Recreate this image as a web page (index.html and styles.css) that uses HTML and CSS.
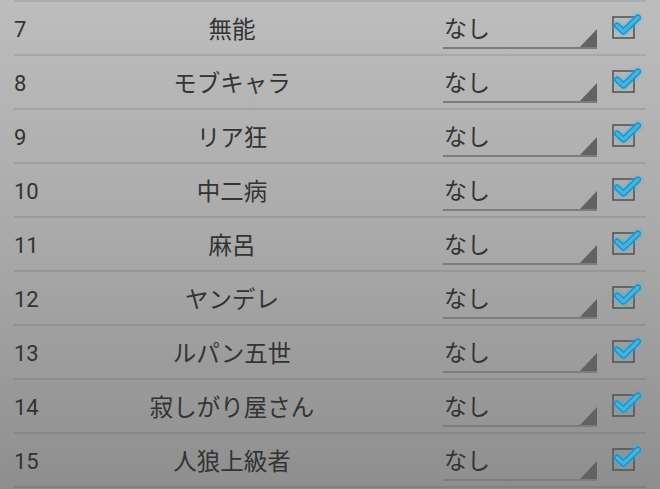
FILE: index.html
```html
<!DOCTYPE html>
<html lang="ja">
<head>
<meta charset="utf-8">
<link rel="stylesheet" href="styles.css">
</head>
<body>
<div class="list">
  <div class="row"><span class="num">7</span><span class="name">無能</span><div class="spinner"><span class="val">なし</span><span class="tri"></span></div><span class="cb"><svg width="34" height="32" viewBox="0 0 34 32"><rect x="1" y="5" width="21" height="21" class="box"/><path d="M5 13.5 L11.5 19.5 L26 5.5" class="chk-o"/><path d="M5 13.5 L11.5 19.5 L26 5.5" class="chk-i"/></svg></span></div>
  <div class="row"><span class="num">8</span><span class="name">モブキャラ</span><div class="spinner"><span class="val">なし</span><span class="tri"></span></div><span class="cb"><svg width="34" height="32" viewBox="0 0 34 32"><rect x="1" y="5" width="21" height="21" class="box"/><path d="M5 13.5 L11.5 19.5 L26 5.5" class="chk-o"/><path d="M5 13.5 L11.5 19.5 L26 5.5" class="chk-i"/></svg></span></div>
  <div class="row"><span class="num">9</span><span class="name">リア狂</span><div class="spinner"><span class="val">なし</span><span class="tri"></span></div><span class="cb"><svg width="34" height="32" viewBox="0 0 34 32"><rect x="1" y="5" width="21" height="21" class="box"/><path d="M5 13.5 L11.5 19.5 L26 5.5" class="chk-o"/><path d="M5 13.5 L11.5 19.5 L26 5.5" class="chk-i"/></svg></span></div>
  <div class="row"><span class="num">10</span><span class="name">中二病</span><div class="spinner"><span class="val">なし</span><span class="tri"></span></div><span class="cb"><svg width="34" height="32" viewBox="0 0 34 32"><rect x="1" y="5" width="21" height="21" class="box"/><path d="M5 13.5 L11.5 19.5 L26 5.5" class="chk-o"/><path d="M5 13.5 L11.5 19.5 L26 5.5" class="chk-i"/></svg></span></div>
  <div class="row"><span class="num">11</span><span class="name">麻呂</span><div class="spinner"><span class="val">なし</span><span class="tri"></span></div><span class="cb"><svg width="34" height="32" viewBox="0 0 34 32"><rect x="1" y="5" width="21" height="21" class="box"/><path d="M5 13.5 L11.5 19.5 L26 5.5" class="chk-o"/><path d="M5 13.5 L11.5 19.5 L26 5.5" class="chk-i"/></svg></span></div>
  <div class="row"><span class="num">12</span><span class="name">ヤンデレ</span><div class="spinner"><span class="val">なし</span><span class="tri"></span></div><span class="cb"><svg width="34" height="32" viewBox="0 0 34 32"><rect x="1" y="5" width="21" height="21" class="box"/><path d="M5 13.5 L11.5 19.5 L26 5.5" class="chk-o"/><path d="M5 13.5 L11.5 19.5 L26 5.5" class="chk-i"/></svg></span></div>
  <div class="row"><span class="num">13</span><span class="name">ルパン五世</span><div class="spinner"><span class="val">なし</span><span class="tri"></span></div><span class="cb"><svg width="34" height="32" viewBox="0 0 34 32"><rect x="1" y="5" width="21" height="21" class="box"/><path d="M5 13.5 L11.5 19.5 L26 5.5" class="chk-o"/><path d="M5 13.5 L11.5 19.5 L26 5.5" class="chk-i"/></svg></span></div>
  <div class="row"><span class="num">14</span><span class="name">寂しがり屋さん</span><div class="spinner"><span class="val">なし</span><span class="tri"></span></div><span class="cb"><svg width="34" height="32" viewBox="0 0 34 32"><rect x="1" y="5" width="21" height="21" class="box"/><path d="M5 13.5 L11.5 19.5 L26 5.5" class="chk-o"/><path d="M5 13.5 L11.5 19.5 L26 5.5" class="chk-i"/></svg></span></div>
  <div class="row"><span class="num">15</span><span class="name">人狼上級者</span><div class="spinner"><span class="val">なし</span><span class="tri"></span></div><span class="cb"><svg width="34" height="32" viewBox="0 0 34 32"><rect x="1" y="5" width="21" height="21" class="box"/><path d="M5 13.5 L11.5 19.5 L26 5.5" class="chk-o"/><path d="M5 13.5 L11.5 19.5 L26 5.5" class="chk-i"/></svg></span></div>
  <div class="row last"></div>
</div>
</body>
</html>
```
FILE: styles.css
```css
html, body {
  margin: 0;
  padding: 0;
  width: 660px;
  height: 489px;
  overflow: hidden;
}
body {
  background: linear-gradient(to bottom, #bdbdbd 0%, #a9a9a9 50%, #8e8e8e 100%);
  font-family: Roboto, "Noto Sans CJK JP", sans-serif;
  color: #333;
}
.list {
  margin: 0 14px;
  width: 632px;
}
.row {
  display: flex;
  align-items: center;
  height: 52px;
  border-top: 2px solid rgba(0, 0, 0, 0.09);
}
.row.last {
  height: 1px;
}
.num {
  width: 46px;
  font-size: 22px;
  line-height: 30px;
  padding-top: 4px;
}
.name {
  width: 344px;
  text-align: center;
  font-family: "Noto Sans CJK JP", sans-serif;
  font-size: 23.5px;
  line-height: 30px;
}
.spinner {
  align-self: flex-start;
  margin-top: 6px;
  margin-left: 39px;
  width: 154px;
  height: 41px;
  box-sizing: border-box;
  border-bottom: 2px solid #7c7c7c;
  display: flex;
  justify-content: space-between;
  align-items: flex-end;
}
.val {
  align-self: flex-start;
  padding-top: 4px;
  padding-left: 1px;
  font-family: "Noto Sans CJK JP", sans-serif;
  font-size: 23px;
  line-height: 30px;
}
.tri {
  width: 17px;
  height: 18px;
  background: #626262;
  clip-path: polygon(100% 0, 100% 100%, 0 100%);
}
.cb {
  margin-left: 15px;
  display: flex;
}
.cb svg {
  overflow: visible;
}
.box {
  fill: none;
  stroke: #555;
  stroke-width: 1.6;
}
.chk-o {
  fill: none;
  stroke: #1f8fc0;
  stroke-width: 6;
  stroke-linecap: round;
  stroke-linejoin: round;
  filter: drop-shadow(0 0 2px rgba(51, 181, 229, 0.85));
}
.chk-i {
  fill: none;
  stroke: #38b8e8;
  stroke-width: 3.5;
  stroke-linecap: round;
  stroke-linejoin: round;
}
```
